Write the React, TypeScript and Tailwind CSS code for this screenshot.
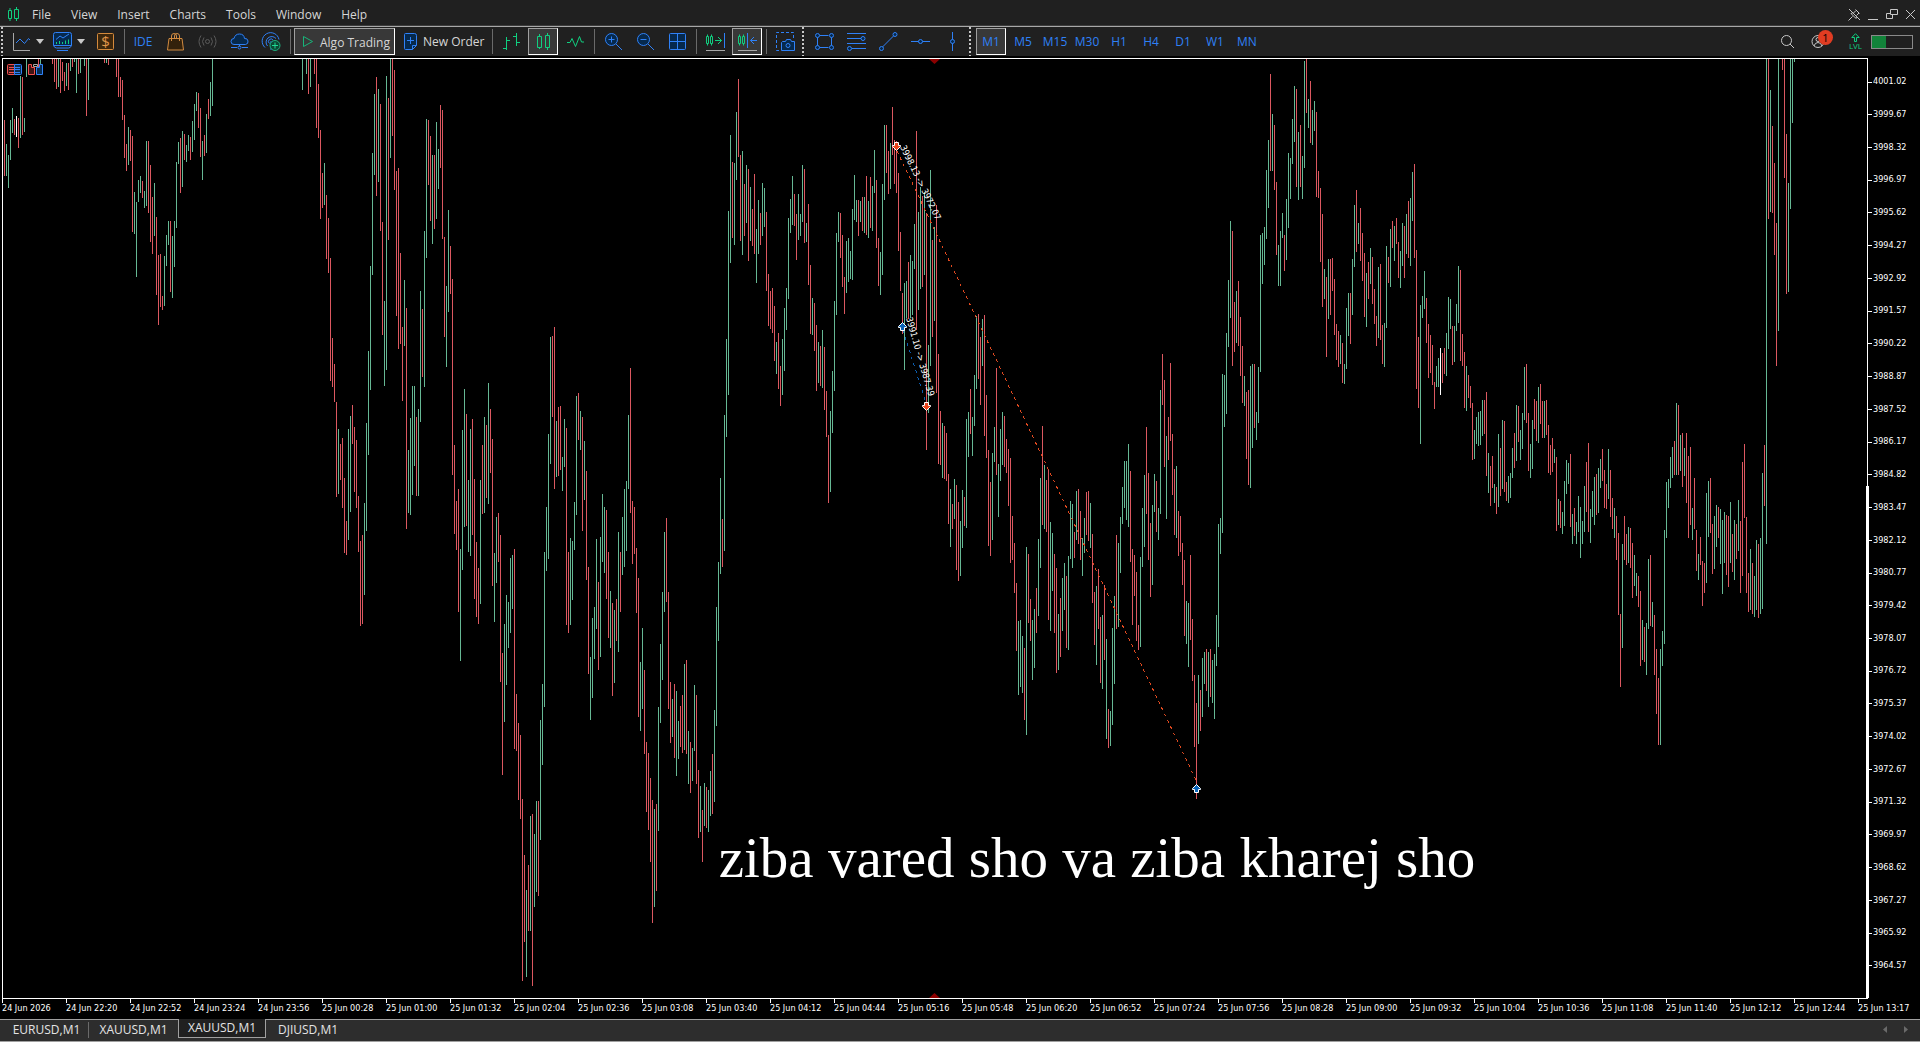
import type { ReactNode } from 'react'

const GREEN = '#66b894'
const RED = '#dc5860'

// Each run starts at an x and steps two pixels per bar: colour, high, low.
const RUNS: [number, string][] = [
  [4, 'r120-176 g144-176 g155-188 g120-160 g108-133 r119-135 w116-137 r118-148 g76-138 r77-135 g118-132 g58-77'],
  [38, 'r58-67 g58-64'],
  [52, 'r58-64 r58-82 r58-89 g58-87 r58-93 r62-81 r72-91 g63-86 r63-90 g58-71 r58-67 g58-62 g58-93 r58-74 g58-73'],
  [84, 'g58-66 r58-116 g58-100'],
  [104, 'r58-63 g58-63 r58-65'],
  [
    116,
    'r58-77 r58-97 r77-97 r80-120 r115-158 r144-171 g127-165 r130-161 r136-232 g192-234 g202-277 g180-202 g176-193 r181-198 g191-208 g141-206 r141-213 r165-242 r197-254 g183-236 r217-295 r255-325 r254-307 r296-310 g256-306 g235-266 g221-245 r221-292 g236-298 g221-267 g162-228 g142-164 r138-193 g131-187 r134-160 g145-162 g135-151 r137-160 g121-152 g104-140 g92-111 r93-128 r108-157 g141-180 r135-156 g114-153 r99-119 g82-116 g58-106',
  ],
  [302, 'g58-90'],
  [306, 'g58-74 r58-94 g58-87'],
  [
    314,
    'r58-74 r58-128 r84-138 r130-219 r173-208 g163-205 r195-259 r218-273 r258-381 r338-387 r364-402 r402-497 g429-494 r444-480 r438-508 r478-553 r521-555 g429-540 g416-512 r405-444 r427-492 r440-508 r496-552 r541-626 r535-624 g503-595 g423-531 g351-455 g266-390 g153-275 g94-175 r77-196 g89-182 r104-231 r222-335 g301-386 g76-370 r98-240 g58-158 r58-136 r70-190 r171-316 r168-349 r253-344 r327-401 g280-346 r308-529 g450-513 g418-515 g386-495 g386-466 r417-496 g409-496 g291-422 r309-377 g231-387 g119-258 r120-185 r136-221 g155-244 r155-229 g122-219 g149-189 r105-168 r110-239 r237-337 g286-367 g210-312 r246-294 r279-475 r445-534 r501-550 r489-612 g549-661 g430-570 g389-527 r414-526 g480-552 g429-556 r419-535 r479-599 r542-617 r568-624 g480-604 r445-514 g417-513 r425-498 g383-504 r409-473 r439-586 g553-622 g517-583 r513-562 r535-682 r653-775 g624-722 g595-685 g602-648 g558-633 g555-609 r549-749 r694-751 r723-800 r735-819 r799-981 r855-942 g890-977 r865-931 g816-931 r814-986 g834-907 g801-892 r801-896 g720-840 g684-765 g552-707 g507-571 g434-559 g337-464 r336-417 r327-489 g421-477 r407-476 r406-470 g457-491 g419-467 r428-625 r552-633 g538-625 g541-600 g502-550 g396-515 r393-440 g411-450 r417-531 g441-500 r471-580 r567-674 g657-720 g618-698 g607-659 g539-629 r582-670 g537-657 g494-562 g507-573 r510-599 r552-638 g591-648 r603-696 g610-683 r599-641 g532-652 r552-612 g517-575 g489-567 g481-551 g415-489 r368-513 r501-564 r507-554 r548-613 r578-717 g662-731 g628-709 r670-754 r742-812 r753-830 r778-862 r800-923 g809-907 r804-891 g707-831 g644-723 g592-680 g532-612 r518-602 r592-709 r682-743 g699-737 r684-758 g691-776 g721-759 r706-747 r695-753 g664-750 r660-754 g731-784 r742-793 g748-781 g685-751 r695-784 r770-838 g786-832 r810-862 g783-826 r787-828 g790-832 g771-816 r754-814 g710-802 g607-726 g562-641 g478-574 r519-567 g415-551 g339-437 g211-395',
  ],
  [
    730,
    'g135-263 r162-238 g163-245 g112-180 r79-157 r155-241 g151-255 r184-236 g165-223 r169-261 g187-241 r209-246 r174-254 g229-283 g200-254 r213-245 g183-236 g188-227 r212-291 r274-326 r291-329 r288-333 r306-361 g342-374 r333-389 r366-406 g339-395 g308-371 g288-330 g218-299 g199-233 g176-225 r194-226 r214-260 g194-240 g214-236 g165-222 r169-243 g223-242 r204-285 r265-334 g298-335 r303-351 r325-391 g342-383 r346-386 g330-388 r347-410 r391-437 r435-503 g411-492 g371-433 g301-391 g233-315 g212-242 r213-258 r235-287 r277-314 g241-293 g238-282 g251-279 g209-280 g175-220 g200-222 r200-236 g201-222 r197-231 g197-233 r176-235 g201-238 r177-228 g186-231 g150-193 r180-248 r238-286 g252-295 g184-275 g125-200 r125-173 r151-194 g143-189 r107-155 r140-184 r141-193 r173-251 r232-291 r293-334 g283-370 g281-318 r262-319 g255-318 g261-315 g224-269 r131-330 g212-310 g187-289 r196-287 g192-275 r213-450 g345-413 g170-366 r240-337 g227-321 r205-393 r354-464 r411-465 g423-478 r426-479 r433-481 r474-524 g489-547 r504-529 g479-519 r485-570 r502-581 g521-576 g490-548 r497-526 g419-528 g412-457 r389-434 g417-456 g375-426 g316-389 r314-379 r337-405 g319-366 r315-436 r395-458 r450-546 r482-556 g453-540 g427-462 r368-475 g464-517 g429-481 g412-465 r416-467 r439-473 r449-506 r458-563 r516-560 r543-593 r583-651 g621-695 g620-687 g636-693 r648-720 g547-735 r554-623 r599-641 g620-680 g609-668 r588-633 g539-616 g478-568 r426-525 g465-529 r480-532 r470-620 g522-631 g533-591 r554-633 r568-673 g614-670 r598-657 g578-631 g563-610 r576-648 g556-650 g501-559 g504-568 r532-558 g491-540 r489-544 r511-560 g538-576 g518-553 r492-535 r491-541 g503-548 r534-603 r592-645 g586-665 r569-629 r617-683 g615-689 r585-660 g639-739 r709-748 g711-746 g628-725 g596-684 r535-629 g543-627 g517-573 g487-524 g461-508 g461-520 g444-527 r471-562 r549-625 r555-596 r572-641 r625-650 g557-647 g508-567 g475-547 r427-514 r473-560 r523-597 g505-585 g474-512 r481-532 g508-540 g390-514 r354-405 r380-467 g436-519 r417-460 r363-441 r434-495 r469-535 g466-538 r511-556 r516-552 r543-585 r560-636 g601-644 g603-667 r555-640 r619-681 r675-747 r703-799 g675-744 r690-731 g658-717 g652-684 r649-691 g652-707 r649-697 g660-703 g654-719 g615-666 g524-647 g518-554 g374-533 g375-427 g333-414 g280-347 g221-318 r231-366 r302-352 g291-343 r281-346 r317-376 r346-403 g376-406 r392-459 r390-485 g366-488 g364-448 r364-428 g412-440 g367-423 g235-372 g233-284 g227-265 g170-239 g140-208 r74-171 g114-171 r125-190 r182-255 g245-286 g231-286 g213-238 r235-271 g199-260 g153-228 g158-199 g119-164 g86-142 r89-187 g132-200 r125-187 g156-199 g61-168 r58-113 g99-128 r81-143 g110-145 g101-131 r112-197 r171-198 r188-262 r214-307 g269-299 r277-357 g259-319 r259-315 r258-291 r279-335 r324-360 r331-367 g335-364 r343-383 g364-384 g308-369 g293-336 r293-344 g259-315 g205-267 r190-252 g223-244 r208-261 r233-281 r253-317 g273-327 r262-299 g248-284 r257-304 r289-324 r316-346 g267-338 r264-340 r325-364 g323-367 g246-328 r257-283 g229-287 r221-248 g226-261 r218-244 r242-278 g251-288 g223-266 r226-278 g214-254 r201-258 g198-266 g172-221 r164-258 r250-389 r337-408 g305-444 g296-318 g271-309 r298-343 r324-378 r335-373 r345-385 r382-409 g366-387 g358-387 w348-395 r353-383 r348-374 g333-376 g297-349 g299-329 r326-365 g326-362 g304-331 g266-323 r270-361 r334-366 r352-408 g366-411 r375-398 r386-408 r403-460 g430-459 g417-444 g412-446 g411-445 g400-436 r400-434 r392-476 g453-493 r466-506 r456-488 g484-503 r487-514 g434-507 r448-496 g420-489 r421-492 r482-501 g476-503 g473-498 g448-478 r433-468 g405-461 r406-442 g430-460 g413-449 g367-420 r364-423 r413-471 g444-478 g420-469 r399-429 r401-441 g387-443 r384-424 r401-438 g401-438 r400-435 r425-473 r445-475 r438-472 g449-463 r457-531 g499-525 r501-528 g512-534 g481-526 g460-494 g463-484 r454-527 g514-544 r508-536 g522-544 g496-532 g507-558 g521-544 g486-532 r462-512 r443-532 g509-543 g491-517 g477-525 r474-515 g468-513 g459-488 r449-481 r470-508 r484-509 g449-499 r470-517 r498-529 g508-538 r516-560 r533-615 r614-687 g544-648 r516-560 r534-565 g527-563 r528-568 r543-598 g555-586 g573-596 r576-607 r591-666 g620-660 r627-662 g623-675 g559-629 r555-626 g602-627 r615-675 r649-714 r678-745 g649-745 g631-666 g530-644 g482-538 g479-508 g457-488 g447-478 r441-475 g403-475 r405-475 g435-471 r433-487 g448-476 r433-503 r456-538 r447-525 g508-540 r478-529 r530-571 g554-580 r537-565 r561-606 r563-593 g493-583 g481-537 r478-533 r524-574 g516-569 g505-547 r507-538 g509-564 g520-594 g512-563 r515-575 r516-587 g502-563 r534-572 g520-580 r524-559 g500-551 r521-593 r462-576 r444-518 r517-593 r573-612 g549-610 r563-614 g576-617 g540-610 r544-618 g538-614 g473-609 r445-506 g58-544 r58-219 g90-212 r126-213 r163-255 r223-366 g58-331',
  ],
  [1782, 'r58-70 r58-178 r134-294 g183-292 g58-209 g58-123 g58-62'],
]

const parseBars = (color: string) =>
  RUNS.flatMap(([start, run]) =>
    run.split(' ').map((bar, i) => {
      const [high, low] = bar.slice(1).split('-')
      return bar[0] === color ? `M${start + i * 2}.5 ${high}V${low}` : ''
    }),
  ).join('')

const PRICES = Array.from({ length: 28 }, (_, i) => (4001.02 - i * 1.35).toFixed(2))

const TIMES = [
  '24 Jun 2026', '24 Jun 22:20', '24 Jun 22:52', '24 Jun 23:24', '24 Jun 23:56',
  '25 Jun 00:28', '25 Jun 01:00', '25 Jun 01:32', '25 Jun 02:04', '25 Jun 02:36',
  '25 Jun 03:08', '25 Jun 03:40', '25 Jun 04:12', '25 Jun 04:44', '25 Jun 05:16',
  '25 Jun 05:48', '25 Jun 06:20', '25 Jun 06:52', '25 Jun 07:24', '25 Jun 07:56',
  '25 Jun 08:28', '25 Jun 09:00', '25 Jun 09:32', '25 Jun 10:04', '25 Jun 10:36',
  '25 Jun 11:08', '25 Jun 11:40', '25 Jun 12:12', '25 Jun 12:44', '25 Jun 13:17',
]

const MENU = ['File', 'View', 'Insert', 'Charts', 'Tools', 'Window', 'Help']
const FRAMES = ['M1', 'M5', 'M15', 'M30', 'H1', 'H4', 'D1', 'W1', 'MN']

const BLUE = '#2f81f7'
const LIME = '#10cf80'
const NAVY = '#06294d'

const Icon = ({ children, color = BLUE }: { children: ReactNode; color?: string }) => (
  <svg width="20" height="21" viewBox="0 0 20 21" fill="none" stroke={color} className="shrink-0" aria-hidden="true">
    {children}
  </svg>
)

const Tool = ({ label, active, children }: { label: string; active?: boolean; children: ReactNode }) => (
  <button
    type="button"
    aria-label={label}
    className={
      active
        ? 'mx-px flex h-[27px] w-[30px] shrink-0 items-center justify-center border border-t-[#a0a0a0] border-r-white border-b-white border-l-[#a0a0a0] bg-[#383838] text-[#2f81f7]'
        : 'flex h-[27px] w-8 shrink-0 items-center justify-center text-[#2f81f7]'
    }
  >
    {children}
  </button>
)

const Separator = () => (
  <div className="flex w-[6px] shrink-0 justify-end pr-[2px]">
    <div className="h-[25px] w-px bg-[#6a6a6a]" />
  </div>
)

const Grip = () => (
  <div className="flex w-[7px] shrink-0 self-stretch pl-px">
    <div className="w-[2px] bg-[repeating-linear-gradient(to_bottom,#c8c8c8_0_2px,transparent_2px_4px)]" />
  </div>
)

const Caret = () => (
  <svg width="8" height="5" viewBox="0 0 8 5" fill="#c8c8c8" aria-hidden="true">
    <path d="M0 0h8L4 5z" />
  </svg>
)

const Marker = ({ x, y, buy }: { x: number; y: number; buy?: boolean }) => (
  <path
    transform={`translate(${x} ${y}) scale(1 ${buy ? 1 : -1})`}
    d="M0-4L4 0V1H2V4H-2V1H-4V0Z"
    fill={buy ? '#0a64b8' : '#e8451c'}
    stroke="#fff"
  />
)

const MenuBar = () => (
  <header className="flex h-[26px] items-center border-b border-[#3c3c3c] bg-[#202020] pr-1 pl-2 text-xs text-[#d6d6d6]">
    <svg width="12" height="15" viewBox="0 0 12 15" fill="none" stroke={LIME} aria-hidden="true" className="mt-1">
      <path d="M.5 3.5h3v8h-3zM6.500 2.500h4v9h-4zM2 1v2.500M2 11.500V14M8.500 0v2.500M8.500 11.500V14" />
    </svg>
    <nav className="flex pt-1 pl-[2px]">
      {MENU.map((item) => (
        <button key={item} type="button" className="px-[10px] leading-4">
          {item}
        </button>
      ))}
    </nav>
    <div className="mt-1 ml-auto flex items-center gap-[7px] text-[#c8c8c8]">
      <button type="button" aria-label="Unpin">
        <svg width="13" height="13" viewBox="0 0 13 13" fill="none" stroke="currentColor">
          <path d="M1 1l11 11M4.500 8.500L.5 12.500M7.500 1.500l4 4M8 2.500L5.500 5M11 5L8.500 7.500M3 5.500l5 5M3 5.500l1.500-.5M8 10.500l.5-2" />
        </svg>
      </button>
      <button type="button" aria-label="Minimize" className="flex h-[11px] w-[10px] items-end">
        <span className="h-px w-full bg-current" />
      </button>
      <button type="button" aria-label="Restore" className="ml-px">
        <svg width="12" height="11" viewBox="0 0 12 11" fill="none" stroke="currentColor">
          <path d="M4.500 .5h7v5h-7zM4.500 4.500h-4v5h6v-4" />
        </svg>
      </button>
      <button type="button" aria-label="Close">
        <svg width="11" height="11" viewBox="0 0 11 11" fill="none" stroke="currentColor">
          <path d="M1 1l9 9M10 1l-9 9" />
        </svg>
      </button>
    </div>
  </header>
)

const Toolbar = () => (
  <div className="flex h-[30px] items-center border-t border-[#a8a8a8] bg-[#202020] text-xs">
    <div className="mr-[-2px] flex self-stretch">
      <Grip />
    </div>
    <button type="button" aria-label="Line studies" className="flex h-[27px] w-[42px] items-center gap-[5px] pl-[6px]">
      <Icon>
        <path d="M2.500 2v17.500H19" stroke="#a8a8a8" />
        <path d="M5 12l4-4 4.500 4.500 4-5L19 9" />
      </Icon>
      <Caret />
    </button>
    <button type="button" aria-label="Indicators" className="flex h-[27px] w-[42px] items-center gap-1 pl-[6px]">
      <Icon>
        <path d="M2.500 1.500h14a2 2 0 0 1 2 2v11h-18v-11a2 2 0 0 1 2-2z" fill={NAVY} />
        <path d="M.5 14.500q1 2.500 3 2.500h12q2 0 3-2.500M4 19.500h11" />
        <path d="M3 8.500L7 5l3 2 6-4" />
        <path d="M3.500 11v2M6.500 10v3M9.500 11v2M12.500 9.500V13M15.500 8.500V13" stroke={LIME} />
      </Icon>
      <Caret />
    </button>
    <Tool label="Symbols">
      <Icon color="#d58a3c">
        <rect x="2.500" y="2.500" width="16" height="16" rx="1" fill="#3d270c" />
        <text x="10.500" y="16" textAnchor="middle" fontSize="15" fill="#e0964a" stroke="none">$</text>
      </Icon>
    </Tool>
    <Separator />
    <Tool label="IDE">IDE</Tool>
    <Tool label="Market">
      <Icon color="#d08a40">
        <path d="M4 7.500h13l1.500 11.500h-16z" fill="#33210b" />
        <path d="M6.500 10V5q0-2.500 2.500-2.500t2.500 2.500V7.500M9.500 7V5q0-2.500 2.500-2.500T14.500 5v5" />
      </Icon>
    </Tool>
    <Tool label="Signals">
      <Icon color="#5a5a5a">
        <circle cx="10.500" cy="10.500" r="2" />
        <path d="M7 6.500q-3 4 0 8M14 6.500q3 4 0 8M4 4.500q-4 6 0 12M17 4.500q4 6 0 12" />
      </Icon>
    </Tool>
    <Tool label="Cloud">
      <Icon>
        <path d="M5 13.500a3 3 0 0 1 0-6q1-4.500 5.500-4.500T15.500 7.500a3 3 0 0 1 1 6z" fill={NAVY} />
        <path d="M10.500 13.500v2M2 16.500h6M13 16.500h6" />
        <circle cx="10.500" cy="16.500" r="1.500" />
      </Icon>
    </Tool>
    <Tool label="Virtual hosting">
      <Icon>
        <path d="M4 16.500A8.500 8.500 0 1 1 18 8.500M6.500 15A5.500 5.500 0 1 1 15 7.500M8.500 12.500A2.500 2.500 0 1 1 12 9M10 10v9" />
        <circle cx="14" cy="14.500" r="5" fill="#0b4a34" stroke="#1fae7c" />
        <path d="M14 11.500v6M11 14.500h6" stroke="#1fd894" />
      </Icon>
    </Tool>
    <Separator />
    <button
      type="button"
      className="mx-px flex h-[27px] w-[101px] shrink-0 items-center gap-[2px] border border-t-[#a0a0a0] border-r-white border-b-white border-l-[#a0a0a0] bg-[#383838] pl-[3px] whitespace-nowrap text-[#d6d6d6]"
    >
      <Icon color="#17b57a">
        <path d="M5.500 5.500l9 5-9 5z" />
      </Icon>
      <span className="pt-[2px]">Algo Trading</span>
    </button>
    <button type="button" className="flex h-[27px] w-[93px] shrink-0 items-center gap-[3px] pl-1 whitespace-nowrap text-[#d6d6d6]">
      <Icon>
        <path d="M5.500 2.500h9a2 2 0 0 1 2 2v10l-4 4h-7a1 1 0 0 1-1-1v-14a1 1 0 0 1 1-1z" fill={NAVY} />
        <path d="M16.500 14.500h-4v4M10.500 6v7M7 9.500h7" />
      </Icon>
      <span>New Order</span>
    </button>
    <Separator />
    <Tool label="Bar chart">
      <Icon color={LIME}>
        <path d="M5.500 6v13M2 17.500h3.500M5.500 9.500H9M15.500 2v13M12 5.500h3.500M15.500 11.500H19" />
      </Icon>
    </Tool>
    <Tool label="Candlesticks" active>
      <Icon color={LIME}>
        <path d="M4.500 5.500h4v11h-4zM12.500 4.500h4v12h-4zM6.500 3v2.500M6.500 16.500V18M14.500 2v2.500M14.500 16.500V19" />
      </Icon>
    </Tool>
    <Tool label="Line chart">
      <Icon color={LIME}>
        <path d="M2 11.500h3l2-4 3.500 8 4-10 2 5.500H19" />
      </Icon>
    </Tool>
    <Separator />
    <Tool label="Zoom in">
      <Icon>
        <circle cx="8.500" cy="8.500" r="6" fill={NAVY} />
        <path d="M13 13l6 6M8.500 5.500v6M5.500 8.500h6" />
      </Icon>
    </Tool>
    <Tool label="Zoom out">
      <Icon>
        <circle cx="8.500" cy="8.500" r="6" fill={NAVY} />
        <path d="M13 13l6 6M5.500 8.500h6" />
      </Icon>
    </Tool>
    <Tool label="Tile windows">
      <Icon>
        <rect x="2.500" y="2.500" width="16" height="16" rx="1" fill={NAVY} />
        <path d="M10.500 2.500v16M2.500 10.500h16" />
      </Icon>
    </Tool>
    <Separator />
    <Tool label="Auto scroll">
      <Icon color={LIME}>
        <path d="M1.500 5.500h2v7h-2zM5.500 5.500h2v7h-2zM2.500 3.500v2M2.500 12.500v2M6.500 3.500v2M6.500 12.500v2M10 9.500h6.500M13 6l3.500 3.500L13 13" />
        <path d="M19.500 2v15" stroke={BLUE} />
        <path d="M1 19.500h19" stroke="#a8a8a8" />
      </Icon>
    </Tool>
    <Tool label="Chart shift" active>
      <Icon color={LIME}>
        <path d="M1.500 5.500h2v7h-2zM5.500 5.500h2v7h-2zM2.500 3.500v2M2.500 12.500v2M6.500 3.500v2M6.500 12.500v2" />
        <path d="M10.500 2v15M20 9.500h-6.500M17 6l-3.500 3.500L17 13" stroke={BLUE} />
        <path d="M1 19.500h19" stroke="#a8a8a8" />
      </Icon>
    </Tool>
    <Separator />
    <Tool label="Screenshot">
      <Icon>
        <path d="M4 19.500H1.500V1.500h17V7" strokeDasharray="3 2" />
        <path d="M7.500 10.500h3l1-2h4l1 2h3v9h-13v-8z" fill={NAVY} />
        <circle cx="13" cy="14.500" r="2" />
      </Icon>
    </Tool>
    <Grip />
    <Tool label="Rectangle">
      <Icon>
        <path d="M5.500 4.500h9M5.500 16.500h9M3.500 6v9M17.500 6v9" />
        <g fill={NAVY}>
          <circle cx="3.500" cy="4.500" r="2" />
          <circle cx="17.500" cy="4.500" r="2" />
          <circle cx="3.500" cy="16.500" r="2" />
          <circle cx="17.500" cy="16.500" r="2" />
        </g>
      </Icon>
    </Tool>
    <Tool label="Fibonacci">
      <Icon>
        <path d="M1 2.500h19M1 7.500h14M1 12.500h19M6 17.500h14" />
        <circle cx="17" cy="7.500" r="2" fill={NAVY} />
        <circle cx="3.500" cy="17.500" r="2" fill={NAVY} />
      </Icon>
    </Tool>
    <Tool label="Trend line">
      <Icon>
        <path d="M4.500 16L15.500 5" />
        <circle cx="3.500" cy="17.500" r="2" fill={NAVY} />
        <circle cx="17" cy="3.500" r="2" fill={NAVY} />
      </Icon>
    </Tool>
    <Tool label="Horizontal line">
      <Icon>
        <path d="M1 10.500h19" />
        <circle cx="10.500" cy="10.500" r="2" fill={NAVY} />
      </Icon>
    </Tool>
    <Tool label="Vertical line">
      <Icon>
        <path d="M10.500 1v19" />
        <circle cx="10.500" cy="10.500" r="2" fill={NAVY} />
      </Icon>
    </Tool>
    <Grip />
    {FRAMES.map((frame) => (
      <Tool key={frame} label={frame} active={frame === 'M1'}>
        {frame}
      </Tool>
    ))}
    <div className="ml-auto flex items-center pr-[7px]">
      <button type="button" aria-label="Search" className="mr-4">
        <svg width="15" height="15" viewBox="0 0 15 15" fill="none" stroke="#c8c8c8">
          <circle cx="6.500" cy="6.500" r="5" />
          <path d="M10 10l4 4" />
        </svg>
      </button>
      <button type="button" aria-label="Account" className="relative mr-[23px]">
        <svg width="15" height="15" viewBox="0 0 15 15" fill="none" stroke="#c8c8c8">
          <circle cx="7" cy="7.500" r="6" />
          <circle cx="7" cy="5.500" r="2" />
          <path d="M3 12q1-3.500 4-3.500t4 3.500" />
        </svg>
        <span className="absolute -top-1 left-[7px] flex size-[15px] items-center justify-center rounded-full bg-[#e03c22] text-[11px] leading-none text-black">
          1
        </span>
      </button>
      <button type="button" aria-label="Level" className="mr-[9px] flex flex-col items-center text-[8px] leading-[8px] text-[#10cf80]">
        <svg width="9" height="9" viewBox="0 0 9 9" fill="none" stroke="currentColor" aria-hidden="true">
          <path d="M4.500 .7L8.200 4.500H5.500V8.500h-2v-4H.8z" />
        </svg>
        LVL
      </button>
      <div className="h-[14px] w-[42px] border border-[#8a8a8a]">
        <div className="h-full w-[14px] bg-[#12833a]" />
      </div>
    </div>
  </div>
)

const Plot = () => (
  <svg
    viewBox="3 59 1864 939"
    preserveAspectRatio="none"
    className="absolute inset-0 h-full w-full overflow-visible"
    role="img"
    aria-label="XAUUSD one minute chart"
  >
    <g shapeRendering="crispEdges" fill="none">
      <path d={parseBars('g')} stroke={GREEN} />
      <path d={parseBars('r')} stroke={RED} />
      <path d={parseBars('w')} stroke="#fff" />
      <path d="M897 151L1196 780" stroke="#e0491f" strokeDasharray="3 4" />
      <path d="M903 330L926 403" stroke="#0a5cae" strokeDasharray="3 4" />
    </g>
    <path d="M2 58h1865v1H2z" fill="#fff" />
    <path d="M929 59h11l-5.500 5zM929 998h11l-5.500-5z" fill="#8b0000" />
    <path d="M1866 486h3v512h-3z" fill="#fff" />
    <Marker x={896.5} y={146.5} />
    <Marker x={902.5} y={326.5} buy />
    <Marker x={926.5} y={406.5} />
    <Marker x={1196.5} y={788.5} buy />
    <g fill="#fff" className="font-['DejaVu_Sans_Condensed','DejaVu_Sans',sans-serif] text-[9px]">
      <text transform="translate(900 147) rotate(64)">3998.13 -&gt; 3972.07</text>
      <text transform="translate(906 318) rotate(74)">3991.10 -&gt; 3987.39</text>
    </g>
    <g fill="none">
      <path d="M14.500 64.500h-6a1 1 0 0 0-1 1v8a1 1 0 0 0 1 1h6z" fill="#401414" stroke="#f05050" />
      <path d="M14.500 64.500h6a1 1 0 0 1 1 1v8a1 1 0 0 1-1 1h-6z" fill="#0a2c50" stroke={BLUE} />
      <path d="M9 67.500h5M9 69.500h5M9 72.500h5" stroke="#f05050" />
      <path d="M15 67.500h5M15 69.500h5M15 72.500h5" stroke={BLUE} />
      <path d="M28.500 64.500h3v3h3v7h-6z" fill="#401414" stroke="#f05050" />
      <path d="M39.500 64.500h3v10h-6v-7h3z" fill="#0a2c50" stroke={BLUE} />
      <path d="M33.500 64.500h4v2h-4z" stroke="#a8a8a8" />
    </g>
    <text
      x="1097"
      y="877"
      textAnchor="middle"
      fill="#fff"
      className="font-['Liberation_Serif',serif] text-[57px]"
    >
      ziba vared sho va ziba kharej sho
    </text>
  </svg>
)

const Chart = () => (
  <main className="flex flex-1 flex-col bg-black pt-[2px] pl-[2px] font-['DejaVu_Sans_Condensed','DejaVu_Sans',sans-serif] text-[9px] text-white">
    <div className="flex flex-1">
      <div className="relative flex-1 border border-white">
        <Plot />
      </div>
      <ol className="flex w-[52px] flex-col justify-between pt-4 pb-[25px]">
        {PRICES.map((price) => (
          <li key={price} className="flex h-4 items-center gap-px">
            <span className="h-px w-1 bg-white" />
            {price}
          </li>
        ))}
      </ol>
    </div>
    <ol className="flex h-5 overflow-hidden">
      {TIMES.map((time) => (
        <li key={time} className="w-16 shrink-0 whitespace-nowrap">
          <div className="h-1 w-px bg-white" />
          <div className="leading-[10px]">{time}</div>
        </li>
      ))}
    </ol>
  </main>
)

const TabBar = () => (
  <footer className="flex h-[23px] items-start border-b border-[#a0a0a0] bg-[#2d2d2d] text-xs text-[#e4e4e4]">
    <div className="flex h-full flex-1 items-start">
      <button type="button" className="h-5 w-[89px] border-t border-[#a0a0a0] pl-1 leading-5">
        EURUSD,M1
      </button>
      <button type="button" className="h-5 w-[89px] border-t border-[#a0a0a0] leading-5">
        <span className="-ml-px block border-l border-[#6a6a6a] leading-4">XAUUSD,M1</span>
      </button>
      <button type="button" className="h-[19px] w-[88px] border border-t-0 border-[#a0a0a0] bg-[#202020] leading-[18px]">
        XAUUSD,M1
      </button>
      <button type="button" className="h-5 flex-1 border-t border-[#a0a0a0] pl-3 text-left leading-5">
        DJIUSD,M1
      </button>
    </div>
    <div className="flex h-[19px] items-center gap-[17px] border-t border-[#a0a0a0] pr-3">
      <button type="button" aria-label="Scroll tabs left">
        <svg width="4" height="7" viewBox="0 0 4 7" fill="#6a6a6a"><path d="M4 0v7L0 3.500z" /></svg>
      </button>
      <button type="button" aria-label="Scroll tabs right">
        <svg width="4" height="7" viewBox="0 0 4 7" fill="#6a6a6a"><path d="M0 0v7l4-3.500z" /></svg>
      </button>
    </div>
  </footer>
)

const App = () => (
  <div className="flex min-h-screen flex-col bg-black font-['Open_Sans','Noto_Sans',sans-serif]">
    <MenuBar />
    <Toolbar />
    <Chart />
    <TabBar />
  </div>
)

export default App
